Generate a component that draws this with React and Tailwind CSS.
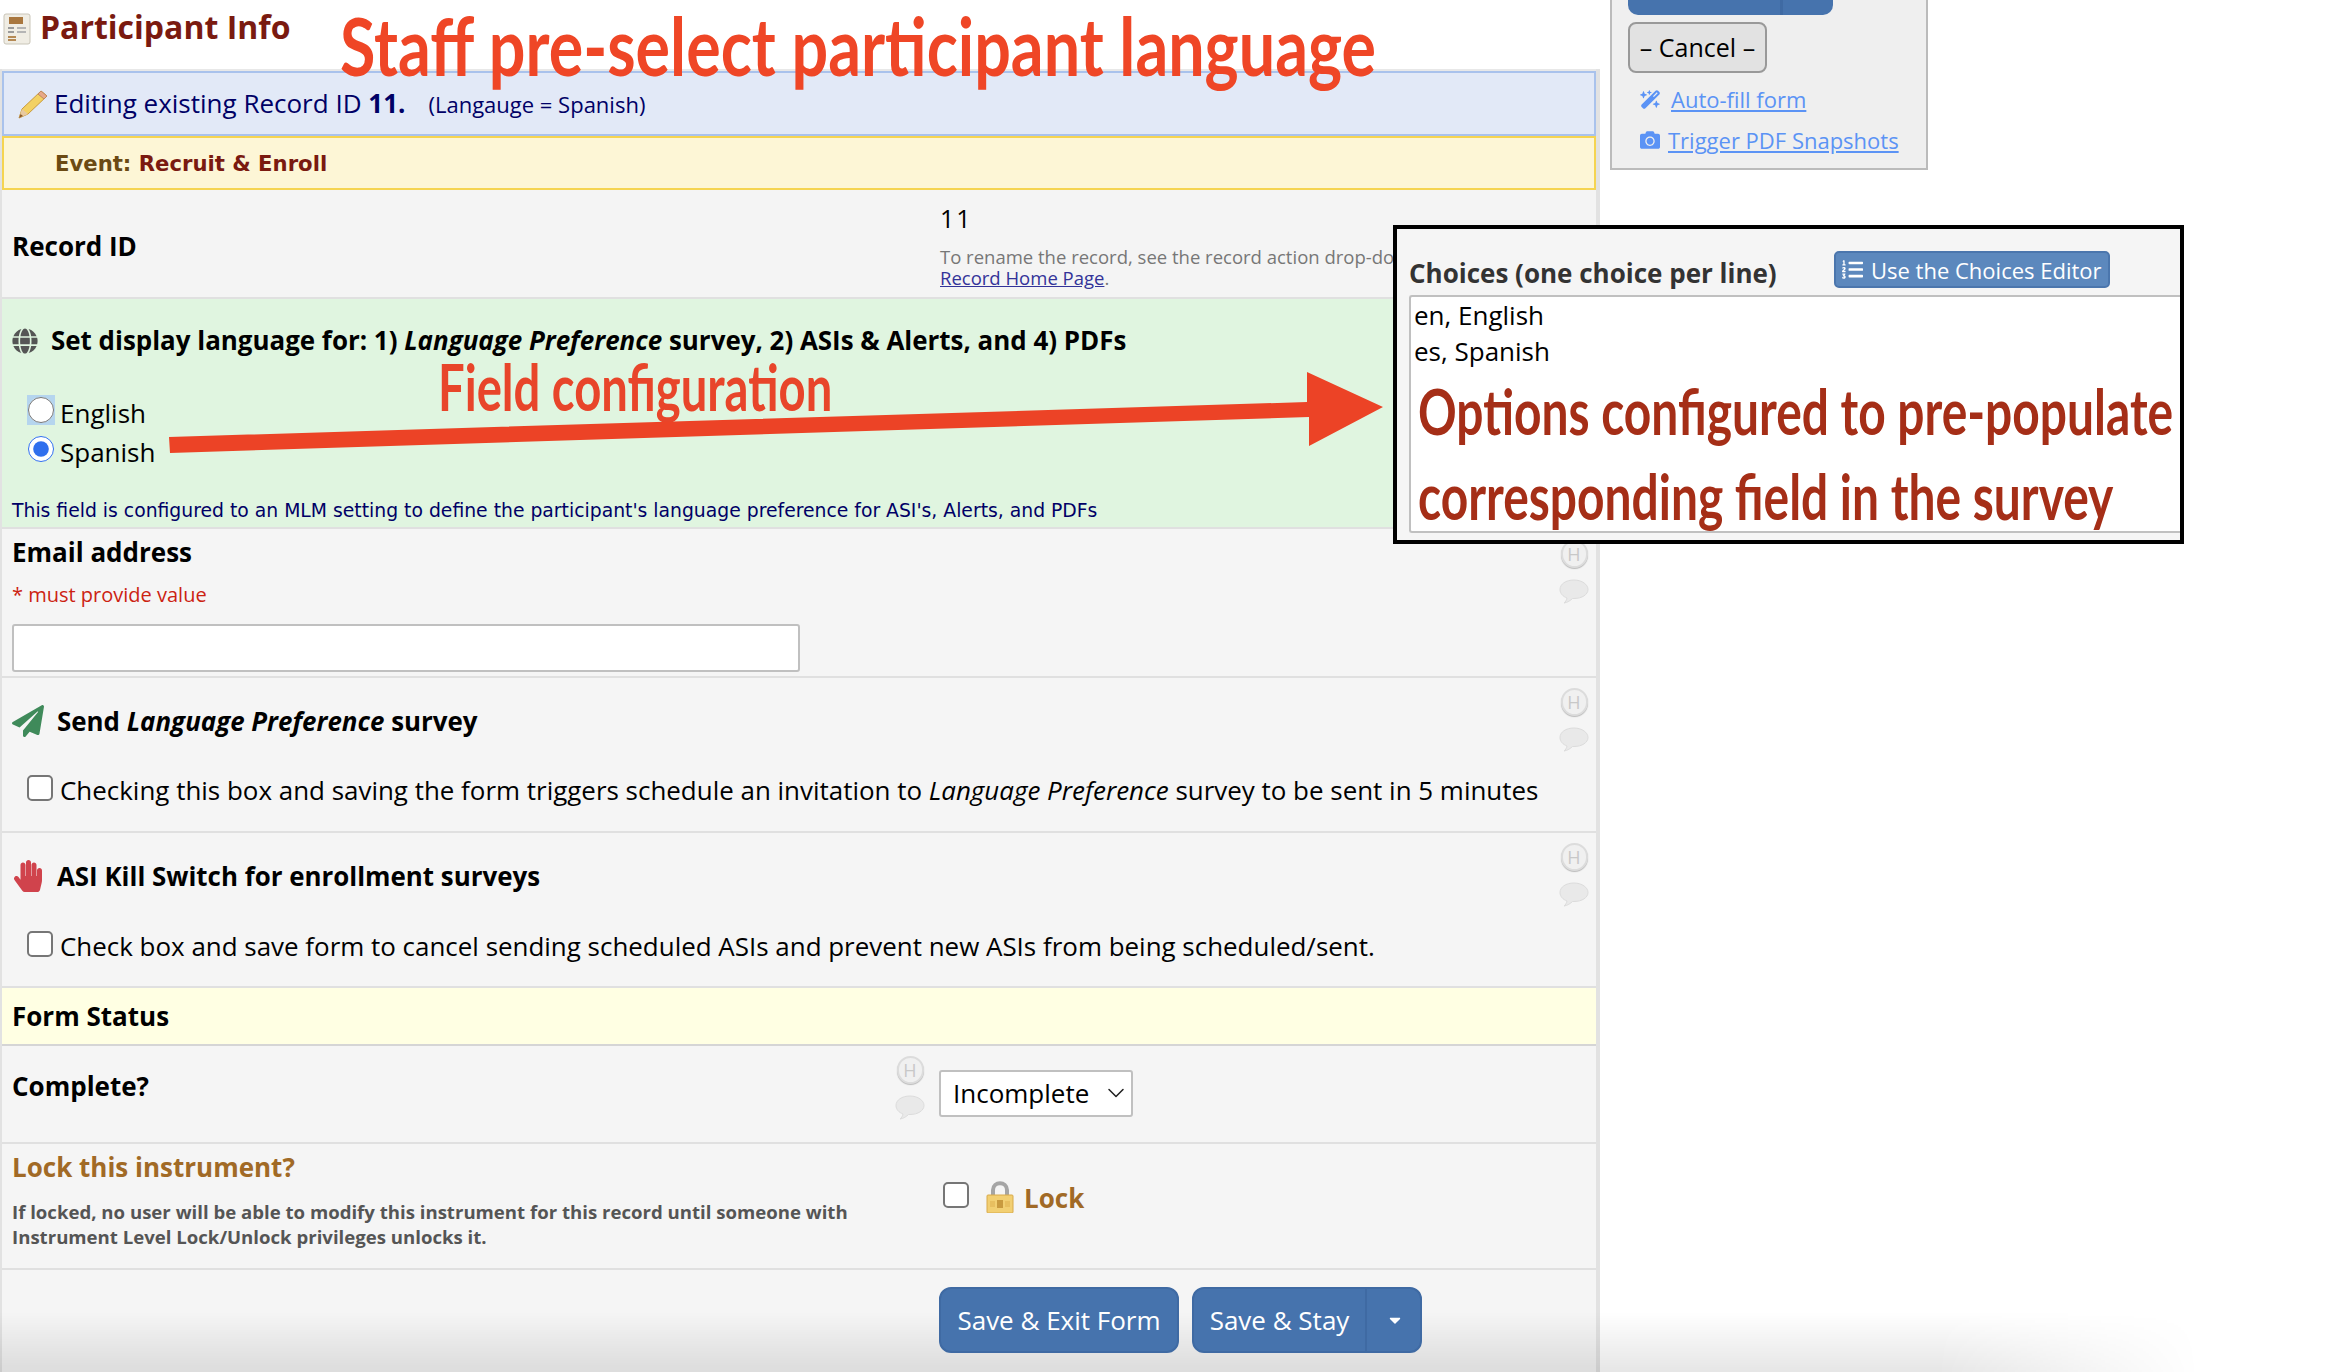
import React from "react";
import { FaGlobe, FaPaperPlane, FaHandPaper, FaCamera, FaListOl, FaCaretDown } from "react-icons/fa";
import { FaWandMagicSparkles } from "react-icons/fa6";
import { ChevronDown } from "lucide-react";

const Hand = "font-['Lato',sans-serif] font-bold";

function HelpIcons({ shift = "" }) {
  return (
    <div className={"flex flex-col items-center gap-[11px] w-[30px] " + shift}>
      <div className="w-[27px] h-[28px] rounded-full border-2 border-[#dcdcdc] bg-[#f0f0f0] flex items-center justify-center text-[18px] leading-none text-[#c8c8c8] shadow-[0_1px_1px_#bbb]">H</div>
      <svg width="30" height="25" viewBox="0 0 30 25" className="block">
        <path d="M15 1C7 1 1 5 1 10.5c0 4 3 7 7 8.500-.5 2-1.500 4-3 5 3.500-.5 6.500-2.500 8.500-4.500H15c8 0 14-4 14-9S23 1 15 1z" fill="#e9e9e9" stroke="#dcdcdc" strokeWidth="1" />
      </svg>
    </div>
  );
}

function FormIcon() {
  return (
    <svg width="28" height="32" viewBox="0 0 28 32" className="block">
      <rect x="1" y="1" width="26" height="30" rx="2" fill="#f0ede4" stroke="#c9c5b8" />
      <rect x="6" y="4" width="14" height="7" fill="#a9773f" />
      <rect x="5" y="14" width="6" height="2" fill="#9b9b9b" /><rect x="14" y="14" width="9" height="2" fill="#b5b5b5" />
      <rect x="5" y="18" width="6" height="2" fill="#9b9b9b" /><rect x="14" y="18" width="9" height="2" fill="#b5b5b5" />
      <rect x="5" y="23" width="8" height="2" fill="#b58a55" /><rect x="5" y="26" width="8" height="2" fill="#b58a55" />
    </svg>
  );
}

function PencilIcon() {
  return (
    <svg width="33" height="30" viewBox="0 0 33 30" className="block">
      <path d="M25 2l6 5L12 25 3 29l3-9z" fill="#f3d163" stroke="#c99a3c" strokeWidth="1" />
      <path d="M25 2l6 5-3 3-6-5z" fill="#e7a889" stroke="#c08a5c" strokeWidth="1" />
      <path d="M6 20l6 5-9 4z" fill="#e8c9a0" />
      <path d="M3 29l1.500-4 2.500 2z" fill="#8a5a2c" />
    </svg>
  );
}

function LockIcon() {
  return (
    <svg width="28" height="32" viewBox="0 0 28 32" className="block">
      <path d="M7 15V9c0-9 14-9 14 0v6" fill="none" stroke="#a5a5a5" strokeWidth="4" />
      <rect x="1" y="14" width="26" height="18" rx="1" fill="#f2cf72" stroke="#d8aa4a" />
      <rect x="11" y="19" width="6" height="8" fill="#c99a3f" />
      <rect x="4" y="20" width="5" height="6" fill="#e8bf60" /><rect x="19" y="20" width="5" height="6" fill="#e8bf60" />
    </svg>
  );
}

function Check() {
  return <span className="block w-[26px] h-[26px] shrink-0 rounded-[5px] border-2 border-[#767676] bg-white" />;
}

const rowBorder = "border-b-2 border-[#e0e0e0]";

export default function App() {
  return (
    <div className="relative h-[1372px] w-[2346px] overflow-hidden bg-white font-['Open_Sans',sans-serif] text-black">
      <div className="flex items-start">
        {/* main form column */}
        <div className="w-[1600px] shrink-0">
          <div className="h-[69px] flex items-start gap-[9px] pl-[3px] pt-[13px]">
            <FormIcon />
            <h1 className="text-[32px] leading-[26px] pt-[1px] font-bold text-[#7a1a10]">Participant Info</h1>
          </div>

          <div className="border-r-[4px] border-l-[2px] border-[#e2e2e2]">
            <div className="border-t-2 border-[#e8e8e8]">
              <div className="h-[65px] bg-[#e2e9f7] border-2 border-[#a9c2ec] flex items-center pl-[12px] text-[#000066]">
                <PencilIcon />
                <span className="text-[26px] ml-[5px]">Editing existing Record ID <b>11.</b></span>
                <span className="text-[22px] ml-[23px] mt-[2px]">(Langauge = Spanish)</span>
              </div>
              <div className="h-[54px] bg-[#fdf6d6] border-2 border-[#f5d451] flex items-center pl-[51px] pt-[2px] font-['DejaVu_Sans',sans-serif] text-[21.200px] font-bold text-[#6b4a13]">
                <span>Event:&nbsp;</span><span className="text-[#7a1a10]">Recruit &amp; Enroll</span>
              </div>
            </div>

            {/* Record ID */}
            <div className={"h-[109px] bg-[#f4f4f4] flex pl-[10px] pt-[38px] " + rowBorder}>
              <div className="w-[928px] text-[26px] font-bold leading-[36px]">Record ID</div>
              <div className="-mt-[26px]">
                <div className="text-[25px] leading-[32px] tracking-[2px]">11</div>
                <div className="mt-[12px] text-[18.500px] leading-[21px] text-[#777777] whitespace-nowrap">To rename the record, see the record action drop-down at top of the</div>
                <div className="text-[18.500px] leading-[21px] text-[#777777]"><span className="underline text-[#333399]">Record Home Page</span>.</div>
              </div>
            </div>

            {/* Language */}
            <div className={"h-[230px] bg-[#e0f5e0] pl-[10px] " + rowBorder}>
              <div className="flex items-center gap-[13px] h-[84px] text-[25.930px] font-bold leading-none">
                <FaGlobe className="w-[26px] h-[26px] text-[#555555] shrink-0" />
                <span>Set display language for: 1) <i>Language Preference</i> survey, 2) ASIs &amp; Alerts, and 4) PDFs</span>
              </div>
              <div className="pl-[15px] mt-[10px] flex flex-col text-[26px] leading-[40px]">
                <label className="flex items-center h-[40px]">
                  <span className="flex w-[28px] h-[30px] -mt-[6px] items-center justify-center bg-[#b5d5ee]">
                    <input type="radio" name="lang" className="w-[26px] h-[26px] m-0 accent-[#2f6fed]" />
                  </span>
                  <span className="ml-[5px]">English</span>
                </label>
                <label className="flex items-center h-[40px] -mt-[1px]">
                  <span className="flex w-[28px] h-[30px] -mt-[6px] items-center justify-center">
                    <input type="radio" name="lang" defaultChecked className="w-[26px] h-[26px] m-0 accent-[#2f6fed]" />
                  </span>
                  <span className="ml-[5px]">Spanish</span>
                </label>
              </div>
              <div className="mt-[27px] font-['DejaVu_Sans',sans-serif] text-[18.800px] leading-[24px] text-[#000066] whitespace-nowrap">This field is configured to an MLM setting to define the participant's language preference for ASI's, Alerts, and PDFs</div>
            </div>

            {/* Email */}
            <div className={"h-[149px] bg-[#f5f5f5] flex justify-between pl-[10px] pr-[7px] " + rowBorder}>
              <div>
                <div className="pt-[7px] text-[26px] font-bold leading-[32px]">Email address</div>
                <div className="mt-[14px] text-[20px] leading-[26px] text-[#cc2211]">* must provide value</div>
                <input type="text" className="block mt-[16px] w-[788px] h-[48px] rounded-[3px] border-2 border-[#c0c0c0] bg-white" />
              </div>
              <HelpIcons shift="mt-[11px]" />
            </div>

            {/* Send */}
            <div className={"h-[155px] bg-[#f5f5f5] flex justify-between pl-[10px] pr-[7px] " + rowBorder}>
              <div>
                <div className="flex items-center gap-[13px] h-[32px] mt-[27px] text-[25.900px] font-bold">
                  <FaPaperPlane className="w-[32px] h-[32px] text-[#3f8a5a] shrink-0" />
                  <span>Send <i>Language Preference</i> survey</span>
                </div>
                <label className="flex items-start mt-[36px] pl-[15px] text-[25.950px] leading-[36px]">
                  <span className="mt-[2px]"><Check /></span>
                  <span className="ml-[7px] -mt-[1px]">Checking this box and saving the form triggers schedule an invitation to <i>Language Preference</i> survey to be sent in 5 minutes</span>
                </label>
              </div>
              <HelpIcons shift="mt-[10px]" />
            </div>

            {/* ASI */}
            <div className={"h-[155px] bg-[#f5f5f5] flex justify-between pl-[10px] pr-[7px] " + rowBorder}>
              <div>
                <div className="flex items-center gap-[13px] h-[32px] mt-[27px] text-[25.900px] font-bold">
                  <FaHandPaper className="w-[32px] h-[32px] text-[#d0434c] shrink-0" />
                  <span>ASI Kill Switch for enrollment surveys</span>
                </div>
                <label className="flex items-start mt-[36px] pl-[15px] text-[25.950px] leading-[36px]">
                  <span className="mt-[3px]"><Check /></span>
                  <span className="ml-[7px]">Check box and save form to cancel sending scheduled ASIs and prevent new ASIs from being scheduled/sent.</span>
                </label>
              </div>
              <HelpIcons shift="mt-[10px]" />
            </div>

            {/* Form status */}
            <div className="h-[58px] bg-[#ffffe3] border-b-2 border-[#d5d5d5] flex items-center pl-[10px] text-[26px] font-bold">Form Status</div>

            {/* Complete */}
            <div className={"h-[98px] bg-[#f5f5f5] flex pl-[10px] " + rowBorder}>
              <div className="w-[883px] pt-[23px] text-[26px] font-bold leading-[34px]">Complete?</div>
              <div className="mt-[10px] w-[30px]"><HelpIcons /></div>
              <div className="relative ml-[14px] mt-[24px] w-[194px] h-[47px]">
                <select defaultValue="Incomplete" className="block w-full h-full appearance-none rounded-[3px] border-2 border-[#c0c0c0] bg-white pl-[12px] text-[26px] text-black">
                  <option>Incomplete</option>
                </select>
                <ChevronDown className="absolute right-[3px] top-[9px] w-[28px] h-[28px] text-[#222222] pointer-events-none" strokeWidth={1.300} />
              </div>
            </div>

            {/* Lock */}
            <div className={"h-[126px] bg-[#f5f5f5] flex pl-[10px] " + rowBorder}>
              <div className="w-[931px]">
                <div className="pt-[6px] text-[26px] font-bold leading-[34px] text-[#a16a26]">Lock this instrument?</div>
                <div className="mt-[15px] w-[880px] text-[18.600px] font-bold leading-[25px] text-[#555555]">If locked, no user will be able to modify this instrument for this record until someone with<br />Instrument Level Lock/Unlock privileges unlocks it.</div>
              </div>
              <div className="flex items-start mt-[38px]">
                <Check />
                <span className="ml-[17px] -mt-[1px]"><LockIcon /></span>
                <span className="ml-[10px] -mt-[2px] text-[26px] font-bold leading-[36px] text-[#a16a26]">Lock</span>
              </div>
            </div>

            {/* Footer */}
            <div className="h-[102px] bg-[#f5f5f5] flex pl-[937px] pt-[17px]">
              <div className="relative z-20 flex gap-[13px] h-[66px] text-[26px] text-white">
                <button className="w-[240px] rounded-[12px] border-2 border-[#3f6aa3] bg-[#4673ad]">Save &amp; Exit Form</button>
                <div className="flex w-[230px] rounded-[12px] border-2 border-[#3f6aa3] bg-[#4673ad]">
                  <button className="w-[173px] border-r-2 border-[#3f6aa3]">Save &amp; Stay</button>
                  <button className="flex-1 flex items-center justify-center pl-[3px]"><FaCaretDown className="w-[18px] h-[18px]" /></button>
                </div>
              </div>
            </div>
          </div>
        </div>

        {/* side panel */}
        <aside className="ml-[10px] w-[318px] h-[170px] shrink-0 border-2 border-t-0 border-[#bbbbbb] bg-[#efefef] pl-[16px]">
          <div className="flex w-[205px] h-[15px] rounded-b-[10px] bg-[#4673ad]">
            <div className="w-[155px] border-r-[3px] border-[#3f6aa3]" />
          </div>
          <button className="block mt-[7px] w-[139px] h-[51px] rounded-[8px] border-2 border-[#999999] bg-[#e2e2e2] text-[25px] leading-none">– Cancel –</button>
          <div className="mt-[13px] flex items-center h-[26px] pl-[12px] text-[22px] text-[#5b93f5]">
            <FaWandMagicSparkles className="w-[21px] h-[21px] shrink-0" />
            <span className="ml-[10px] underline">Auto-fill form</span>
          </div>
          <div className="mt-[15px] flex items-center h-[26px] pl-[12px] text-[22px] text-[#5b93f5]">
            <FaCamera className="w-[20px] h-[20px] shrink-0" />
            <span className="ml-[8px] underline whitespace-nowrap">Trigger PDF Snapshots</span>
          </div>
        </aside>
      </div>

      {/* annotations */}
      <div className={"absolute left-[340px] top-[10px] text-[64.600px] leading-[70px] text-[#ef4626] whitespace-nowrap scale-y-[1.25] " + Hand}>Staff pre-select participant language</div>
      <div className={"absolute left-[438px] top-[351px] text-[47.200px] leading-[70px] text-[#e8452a] whitespace-nowrap scale-y-[1.38] " + Hand}>Field configuration</div>

      <svg className="absolute left-[160px] top-[365px]" width="1230" height="95" viewBox="0 0 1230 95">
        <path d="M9 72 L1147 37 L1147 7 L1223 42 L1149 81 L1149 52 L10 88 Z" fill="#ec4326" />
      </svg>

      {/* choices box */}
      <div className="absolute left-[1393px] top-[225px] w-[791px] h-[319px] border-[4px] border-black bg-[#f5f5f5] pl-[12px]">
        <div className="flex items-start h-[66px] pt-[22px]">
          <div className="w-[425px] pt-[5px] text-[26px] font-bold leading-[34px] text-[#333333]">Choices (one choice per line)</div>
          <button className="flex items-center w-[276px] h-[37px] rounded-[5px] border-2 border-[#4b76ad] bg-[#5c88bd] pl-[6px] text-[22px] leading-none text-white">
            <FaListOl className="w-[21px] h-[21px] shrink-0" />
            <span className="ml-[8px] whitespace-nowrap">Use the Choices Editor</span>
          </button>
        </div>
        <div className="h-[238px] rounded-tl-[3px] rounded-bl-[3px] border-2 border-r-0 border-[#c0c0c0] bg-white pl-[3px]">
          <div className="text-[26px] leading-[36px]">en, English</div>
          <div className="text-[26px] leading-[36px]">es, Spanish</div>
          <div className={"pl-[4px] -mt-[1px] text-[47.900px] leading-[85px] text-[#a52e17] whitespace-nowrap " + Hand}>
            <div className="scale-y-[1.32]">Options configured to pre-populate</div>
            <div className="scale-y-[1.32]">corresponding field in the survey</div>
          </div>
        </div>
      </div>

      {/* bottom shadow */}
      <div className="absolute left-0 bottom-0 w-[2200px] h-[60px] pointer-events-none bg-gradient-to-b from-transparent to-black/10 [mask-image:linear-gradient(to_right,black_88%,transparent)]" />
    </div>
  );
}
